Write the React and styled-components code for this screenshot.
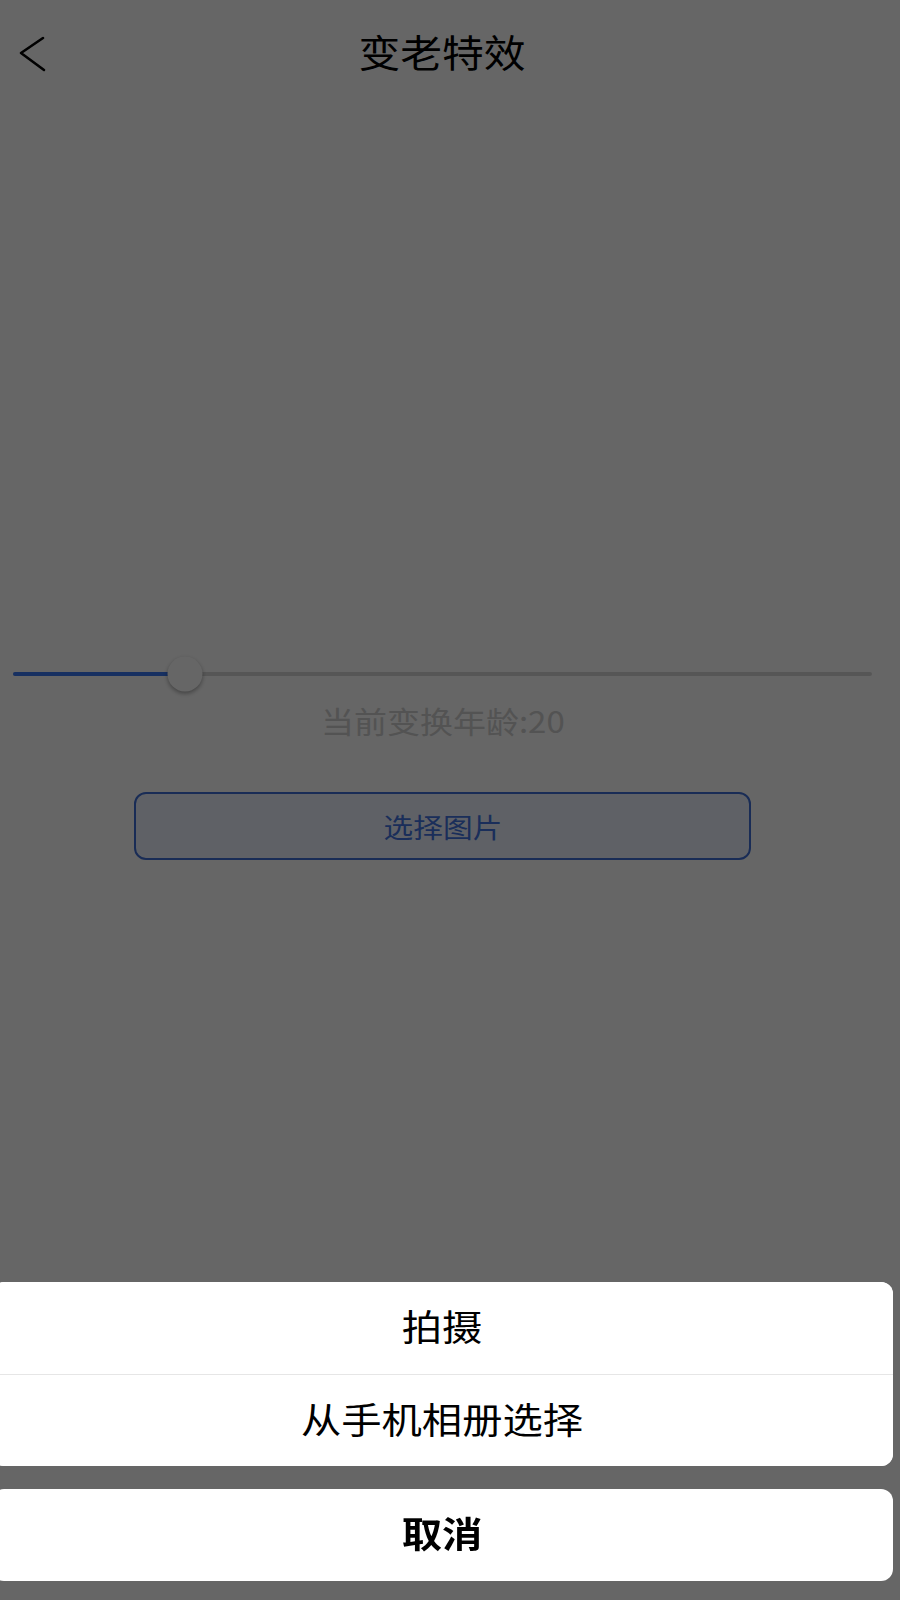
import React from "react";
import styled, { createGlobalStyle } from "styled-components";

const Global = createGlobalStyle`
  html, body { margin: 0; padding: 0; overflow: hidden; background: #fff; }
  body { font-family: "Noto Sans CJK SC", "Noto Sans", sans-serif; }
`;

const Frame = styled.div`
  width: 901px;
  margin-left: -8px;
  min-height: 1600px;
  background: #fff;
  display: flex;
  flex-direction: column;
`;

const Stretch = styled.span`
  display: inline-block;
  transform: scaleX(${(p) => p.$x || 1.1});
`;

const Header = styled.header`
  height: 108px;
  display: grid;
  grid-template-columns: 80px 1fr 80px;
  align-items: center;
`;

const BackButton = styled.button`
  border: none;
  background: none;
  padding: 0 0 0 26px;
  height: 108px;
  display: flex;
  align-items: center;
  color: #000;
`;

const Title = styled.h1`
  margin: 0 0 8px;
  text-align: center;
  font-size: 38px;
  font-weight: 400;
  color: #000;
`;

const Content = styled.main`
  display: flex;
  flex-direction: column;
  align-items: stretch;
  padding-top: 548px;
`;

const SliderWrap = styled.div`
  padding: 0 21px;
  height: 36px;
  display: flex;
  align-items: center;
`;

const Track = styled.div`
  position: relative;
  flex: 1;
  height: 4px;
  border-radius: 2px;
  background: #d8d8d8;
`;

const Fill = styled.div`
  height: 100%;
  border-radius: 2px;
  background: #3a78f2;
`;

const Thumb = styled.div`
  position: absolute;
  top: 50%;
  width: 35px;
  height: 35px;
  border-radius: 50%;
  background: #fff;
  box-shadow: 0 2px 4px rgba(0, 0, 0, 0.35);
  transform: translate(-50%, -50%);
`;

const AgeLabel = styled.div`
  margin-top: 10px;
  text-align: center;
  font-size: 30px;
  color: #cfcfcf;
  line-height: 36px;
`;

const PickButton = styled.button`
  margin: 54px 142px 0;
  height: 68px;
  border: 2px solid #3f6fd6;
  border-radius: 12px;
  background: #eef3ff;
  color: #4373e0;
  font-family: "Noto Sans CJK SC", "Noto Sans", sans-serif;
  font-size: 27px;
  font-weight: 400;
`;

const Overlay = styled.div`
  position: fixed;
  inset: 0;
  background: rgba(0, 0, 0, 0.6);
  display: flex;
  flex-direction: column;
  justify-content: flex-end;
`;

const Sheet = styled.div`
  width: 901px;
  margin: 0 0 19px -8px;
  display: flex;
  flex-direction: column;
  gap: 23px;
`;

const Card = styled.div`
  background: #fff;
  border-radius: 12px;
  overflow: hidden;
  display: flex;
  flex-direction: column;
`;

const SheetItem = styled.button`
  height: 92px;
  border: none;
  background: #fff;
  color: #000;
  font-family: "Noto Sans CJK SC", "Noto Sans", sans-serif;
  font-size: 36px;
  font-weight: ${(p) => (p.$bold ? 700 : 400)};
  padding: 0 0 6px;
  & + & {
    border-top: 1px solid #e6e6e6;
  }
`;

export default function App() {
  const age = 20;
  const pct = age;
  return (
    <>
      <Global />
      <Frame>
        <Header>
          <BackButton aria-label="返回">
            <svg width="30" height="38" viewBox="0 0 30 38">
              <polyline
                points="25,3 3,18 26,35"
                fill="none"
                stroke="#000"
                strokeWidth="2.6"
                strokeLinecap="round"
                strokeLinejoin="round"
              />
            </svg>
          </BackButton>
          <Title>
            <Stretch $x={1.1}>变老特效</Stretch>
          </Title>
          <div />
        </Header>
        <Content>
          <SliderWrap>
            <Track>
              <Fill style={{ width: `${pct}%` }} />
              <Thumb style={{ left: `${pct}%` }} />
            </Track>
          </SliderWrap>
          <AgeLabel>
            <Stretch $x={1.1}>当前变换年龄:{age}</Stretch>
          </AgeLabel>
          <PickButton>
            <Stretch $x={1.1}>选择图片</Stretch>
          </PickButton>
        </Content>
      </Frame>
      <Overlay>
        <Sheet>
          <Card>
            <SheetItem>
              <Stretch $x={1.12}>拍摄</Stretch>
            </SheetItem>
            <SheetItem>
              <Stretch $x={1.12}>从手机相册选择</Stretch>
            </SheetItem>
          </Card>
          <Card>
            <SheetItem $bold>
              <Stretch $x={1.12}>取消</Stretch>
            </SheetItem>
          </Card>
        </Sheet>
      </Overlay>
    </>
  );
}
